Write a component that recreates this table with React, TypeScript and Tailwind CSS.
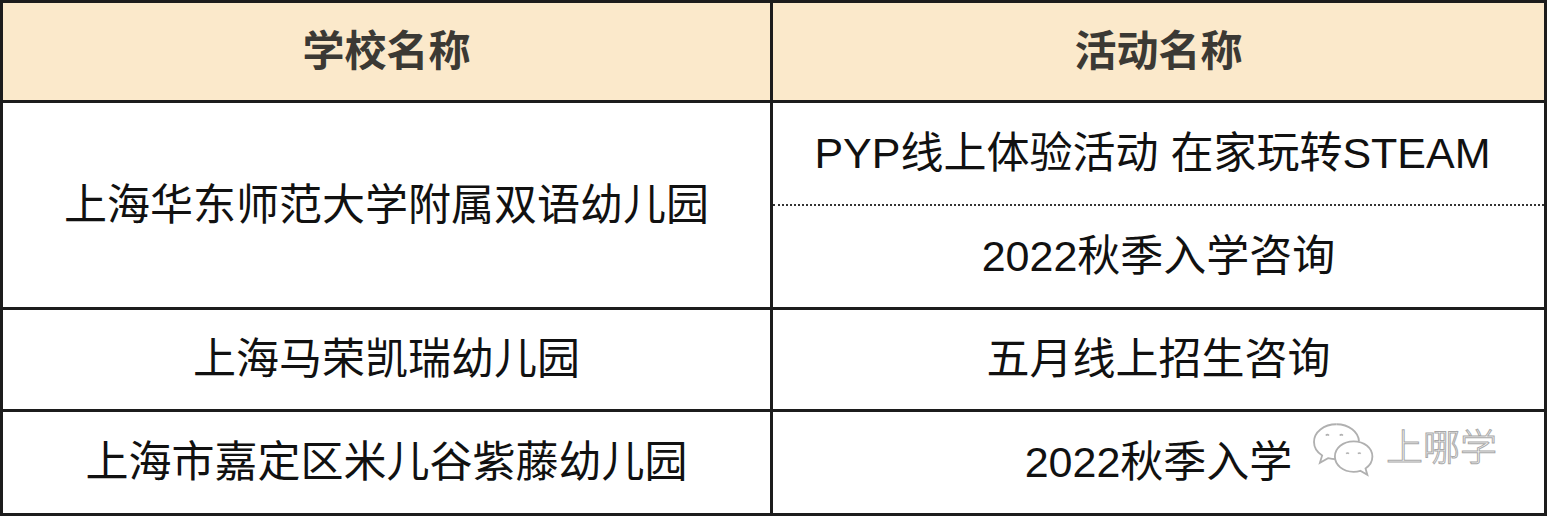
const font = { fontFamily: '"Liberation Sans", "Noto Sans CJK SC", sans-serif' };

const WeChatMark = () => (
  <svg width="68" height="60" viewBox="0 0 62 56" fill="none">
    {/* back bubble */}
    <path
      d="M24 3C12 3 3 10.5 3 19.5c0 5.2 3 9.6 7.6 12.6L8.5 39l7.6-4.3c2.5.7 5.1 1 7.9 1 1 0 2-.05 3-.15"
      stroke="#b0b0b0"
      strokeWidth="1.7"
      fill="white"
    />
    <path d="M24 3c11.5 0 20.6 7 21 16" stroke="#b0b0b0" strokeWidth="1.7" />
    <path d="M14 13.5q1.5-1.5 3 0M27 13.5q1.5-1.5 3 0" stroke="#b0b0b0" strokeWidth="1.5" />
    {/* front bubble */}
    <path
      d="M40 19c-10 0-17.5 6.3-17.5 14.2S30 47.4 40 47.4c2.2 0 4.3-.3 6.2-.9l6.6 3.8-1.7-6c3.9-2.6 6.4-6.6 6.4-11.1C57.5 25.3 50 19 40 19z"
      stroke="#b0b0b0"
      strokeWidth="1.7"
      fill="white"
    />
    <path d="M33 30.5q1.3-1.3 2.6 0M44 30.5q1.3-1.3 2.6 0" stroke="#b0b0b0" strokeWidth="1.5" />
  </svg>
);

export default function App() {
  return (
    <div className="w-[1547px] h-[516px] bg-white relative" style={font}>
      <div className="w-[1547px] h-[516px] border-[3px] border-[#1c1c1c] flex flex-col">
        {/* header */}
        <div className="flex h-[97px] bg-[#fbe9cb] text-[#3b3934] text-[42px] font-bold">
          <div className="w-[770px] border-r-[3px] border-[#1c1c1c] flex items-center justify-center">
            学校名称
          </div>
          <div className="flex-1 flex items-center justify-center">活动名称</div>
        </div>

        {/* row 1 */}
        <div className="flex h-[207px] border-t-[3px] border-[#1c1c1c] text-[43px] text-[#111]">
          <div className="w-[770px] border-r-[3px] border-[#1c1c1c] flex items-center justify-center">
            上海华东师范大学附属双语幼儿园
          </div>
          <div className="flex-1 flex flex-col">
            <div className="flex-1 flex items-center justify-center pr-[12px]">
              PYP线上体验活动 在家玩转STEAM
            </div>
            <div className="border-t-2 border-dotted border-[#333]" />
            <div className="flex-1 flex items-center justify-center">2022秋季入学咨询</div>
          </div>
        </div>

        {/* row 2 */}
        <div className="flex h-[102px] border-t-[3px] border-[#1c1c1c] text-[43px] text-[#111]">
          <div className="w-[770px] border-r-[3px] border-[#1c1c1c] flex items-center justify-center">
            上海马荣凯瑞幼儿园
          </div>
          <div className="flex-1 flex items-center justify-center">五月线上招生咨询</div>
        </div>

        {/* row 3 */}
        <div className="flex flex-1 border-t-[3px] border-[#1c1c1c] text-[43px] text-[#111]">
          <div className="w-[770px] border-r-[3px] border-[#1c1c1c] flex items-center justify-center">
            上海市嘉定区米儿谷紫藤幼儿园
          </div>
          <div className="flex-1 flex items-center justify-center">2022秋季入学</div>
        </div>
      </div>

      {/* watermark */}
      <div className="absolute left-[1310px] top-[421px] flex items-center gap-[8px]">
        <WeChatMark />
        <span
          className="text-[37px] font-light text-white -mt-[10px]"
          style={{ WebkitTextStroke: '1px #a8a8a8', fontFamily: '"Noto Sans CJK SC", sans-serif' }}
        >
          上哪学
        </span>
      </div>
    </div>
  );
}
